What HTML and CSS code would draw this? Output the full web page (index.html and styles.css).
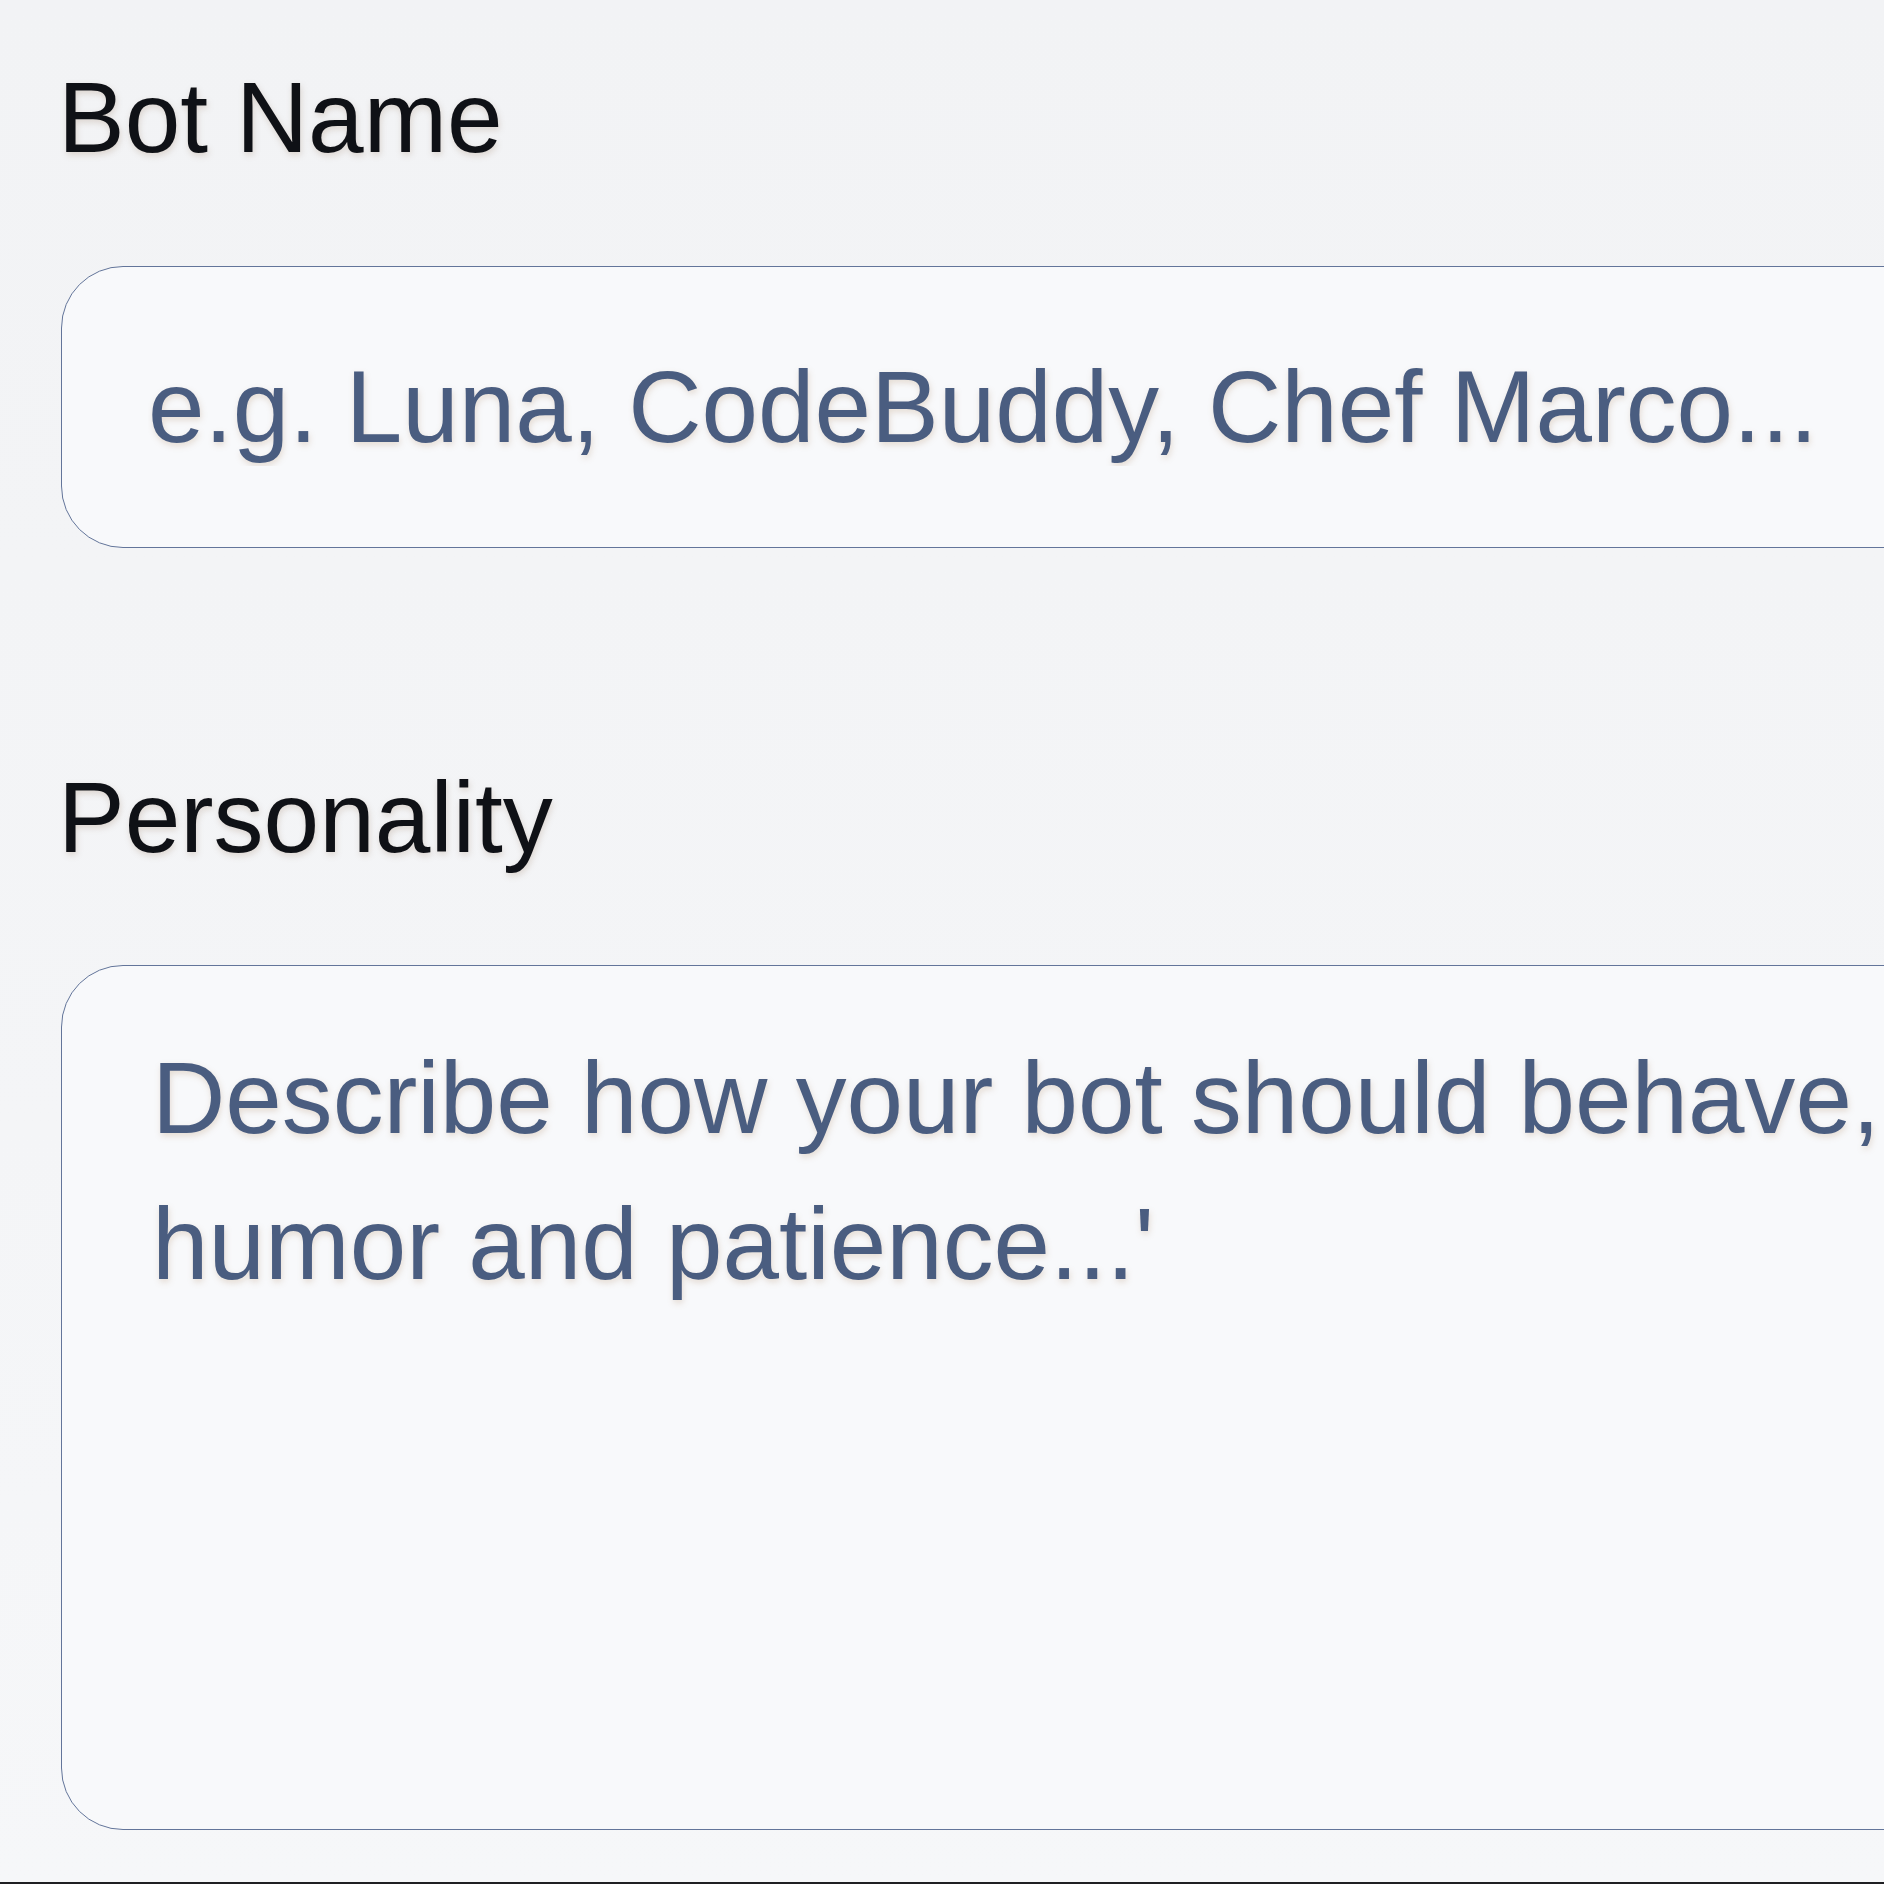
FILE: index.html
```html
<!DOCTYPE html>
<html lang="en">
<head>
<meta charset="utf-8">
<title>Bot settings</title>
<link rel="stylesheet" href="styles.css">
</head>
<body>
<main class="page">
  <form class="form">
    <div class="field field-name">
      <label class="label" for="bot-name">Bot Name</label>
      <input class="control input" id="bot-name" type="text" placeholder="e.g. Luna, CodeBuddy, Chef Marco...">
    </div>
    <div class="field field-personality">
      <label class="label" for="bot-personality">Personality</label>
      <textarea class="control textarea" id="bot-personality" placeholder="Describe how your bot should behave, e.g. 'A friendly assistant with a great sense of&#10;humor and patience...'"></textarea>
    </div>
  </form>
</main>
</body>
</html>
```

FILE: styles.css
```css
html, body {
  margin: 0;
  padding: 0;
  overflow: hidden;
  background: #f3f4f6;
}

.page {
  box-sizing: border-box;
  width: 100vw;
  height: 100vh;
  overflow: hidden;
  background: linear-gradient(180deg, #f2f3f5 0%, #f4f5f7 60%, #f6f7f9 100%);
  border-bottom: 2px solid #1f2023;
}

.form {
  display: flex;
  flex-direction: column;
  padding: 60px 0 0 58px;
  width: 4400px;
}

.field {
  display: flex;
  flex-direction: column;
}

.field-personality {
  margin-top: 212px;
}

.label {
  font-family: "Liberation Sans", Arial, sans-serif;
  font-size: 100px;
  line-height: 115px;
  color: #0f1116;
  text-shadow: 1px 3px 6px rgba(150, 120, 90, 0.25);
}

.control {
  box-sizing: border-box;
  margin: 91px 0 0 3px;
  width: 4300px;
  border: 1.5px solid #63759a;
  background: #f8f9fb;
  font-family: "Liberation Sans", Arial, sans-serif;
  font-size: 101.6px;
  color: #4a5d80;
  outline: none;
  padding: 0 0 0 86px;
}

.control::placeholder {
  color: #4a5d80;
  opacity: 1;
  text-shadow: 1px 3px 6px rgba(170, 130, 90, 0.25);
}

.input {
  height: 282px;
  border-radius: 62px;
}

.textarea {
  height: 865px;
  margin-top: 90px;
  border-radius: 62px;
  padding-top: 59px;
  padding-left: 90px;
  line-height: 146px;
  resize: none;
  overflow: hidden;
  white-space: pre;
}
```
